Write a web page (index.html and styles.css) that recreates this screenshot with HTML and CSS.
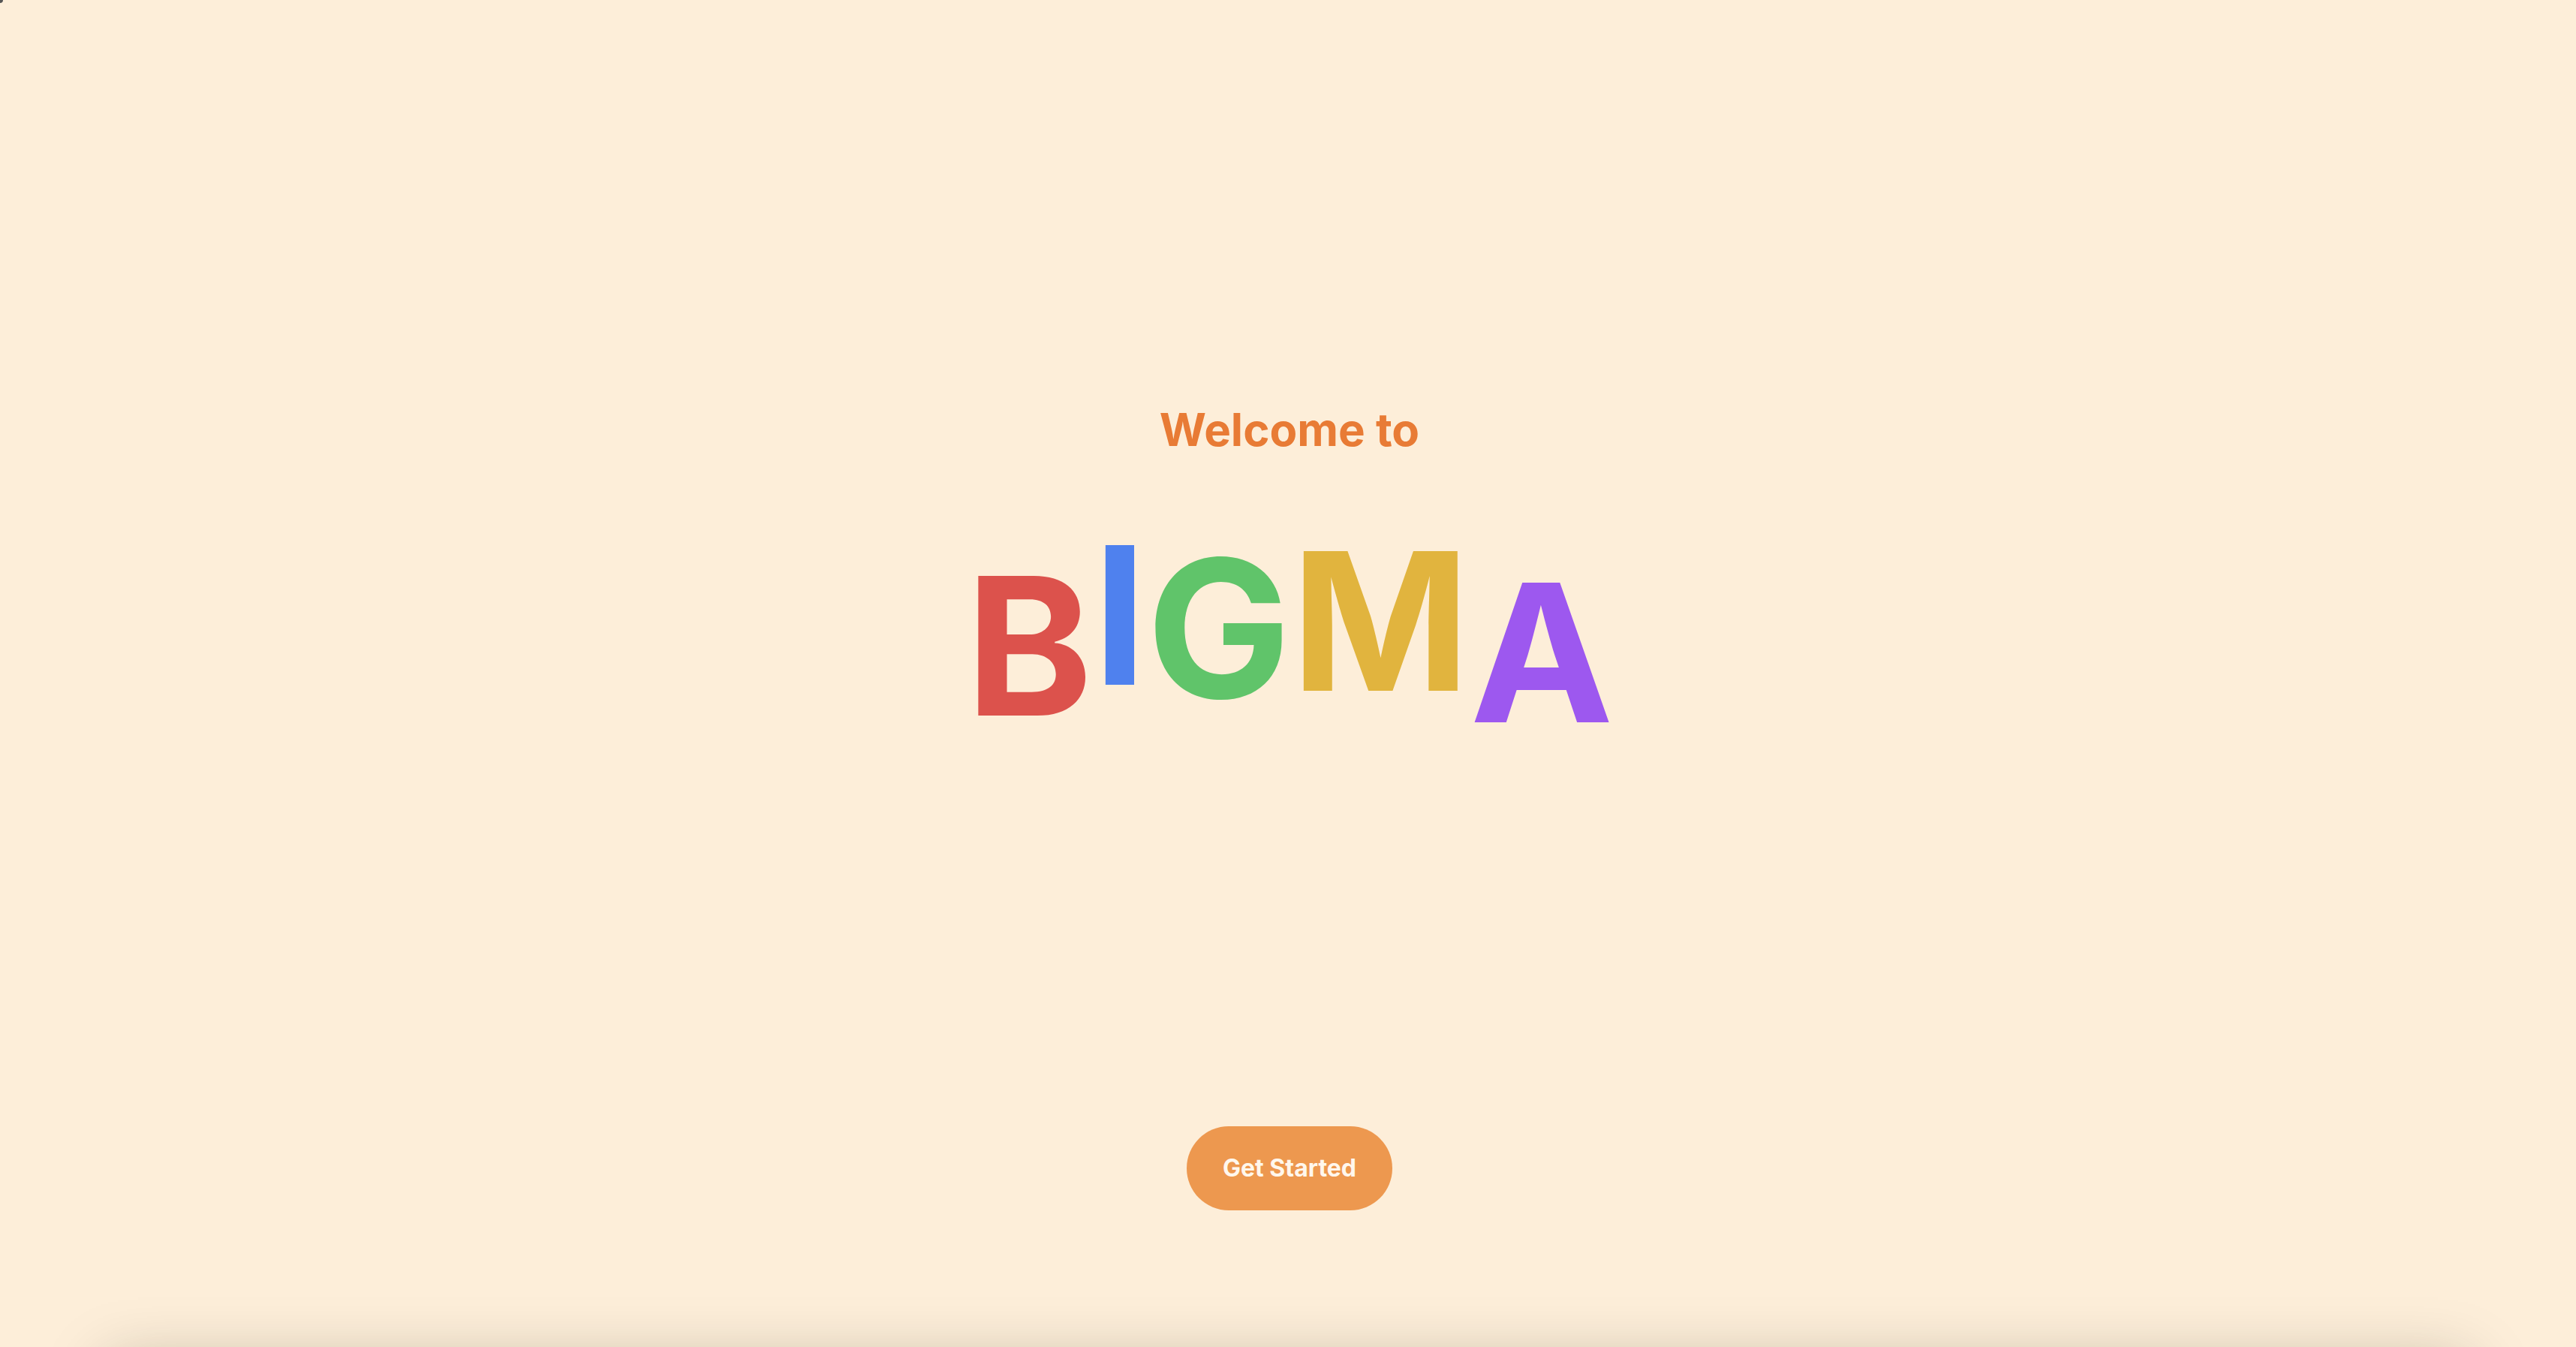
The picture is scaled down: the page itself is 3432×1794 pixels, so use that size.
FILE: index.html
```
<!DOCTYPE html>
<html lang="en">

<head>
  <meta charset="UTF-8">
  <meta name="viewport" content="width=device-width, initial-scale=1.0">
  <title>Bigma</title>
  <link rel="stylesheet" href="styles.css">
</head>

<body>
  <main class="landing">
    <p class="welcome">Welcome to</p>
    <h1 class="logo" aria-label="BIGMA">
      <span class="letter red">B</span>
      <span class="letter blue">I</span>
      <span class="letter green">G</span>
      <span class="letter yellow">M</span>
      <span class="letter purple">A</span>
    </h1>
    <button class="start" type="button">Get Started</button>
  </main>

  <!-- closed panel, only its shadow shows -->
  <div class="drawer"></div>
  <div class="cursor"></div>
</body>

</html>
```

FILE: styles.css
```
* {
  margin: 0;
  padding: 0;
  box-sizing: border-box;
}

body {
  font-family: Inter, "Liberation Sans", sans-serif;
  font-variation-settings: "opsz" 32;
  background-color: #fdeed9;
  overflow: hidden;
}

.landing {
  min-height: 100vh;
  padding: 0 0 182px 4px;
  display: flex;
  flex-direction: column;
  align-items: center;
  justify-content: flex-end;
}

.welcome {
  font-size: 60px;
  line-height: 72px;
  font-weight: 700;
  color: #e87b35;
}

.logo {
  display: flex;
  margin: 124px 0 512px;
  font-size: 256px;
  line-height: 256px;
  font-weight: 700;
}

/* each letter is stopped at its own height of the bounce */
.letter {
  transform: translateY(var(--bounce));
}

.red {
  --bounce: 0px;
  color: #dc524c;
}

.blue {
  --bounce: -41px;
  color: #4f81ee;
}

.green {
  --bounce: -23px;
  color: #60c46a;
}

.yellow {
  --bounce: -33px;
  color: #e1b43e;
}

.purple {
  --bounce: 9px;
  color: #9d58ef;
}

.start {
  padding: 32px 48px;
  border: none;
  border-radius: 56px;
  background-color: #ed984f;
  color: #fff7ed;
  font-family: inherit;
  font-size: 32px;
  line-height: 48px;
  font-weight: 700;
  cursor: pointer;
}

.drawer {
  position: fixed;
  top: 100%;
  left: 144px;
  right: 144px;
  height: 400px;
  box-shadow: 0 24px 80px rgba(20, 30, 0, 0.28);
}

.cursor {
  position: fixed;
  top: -4px;
  left: -4px;
  width: 8px;
  height: 8px;
  border-radius: 50%;
  background-color: #555;
}
```
